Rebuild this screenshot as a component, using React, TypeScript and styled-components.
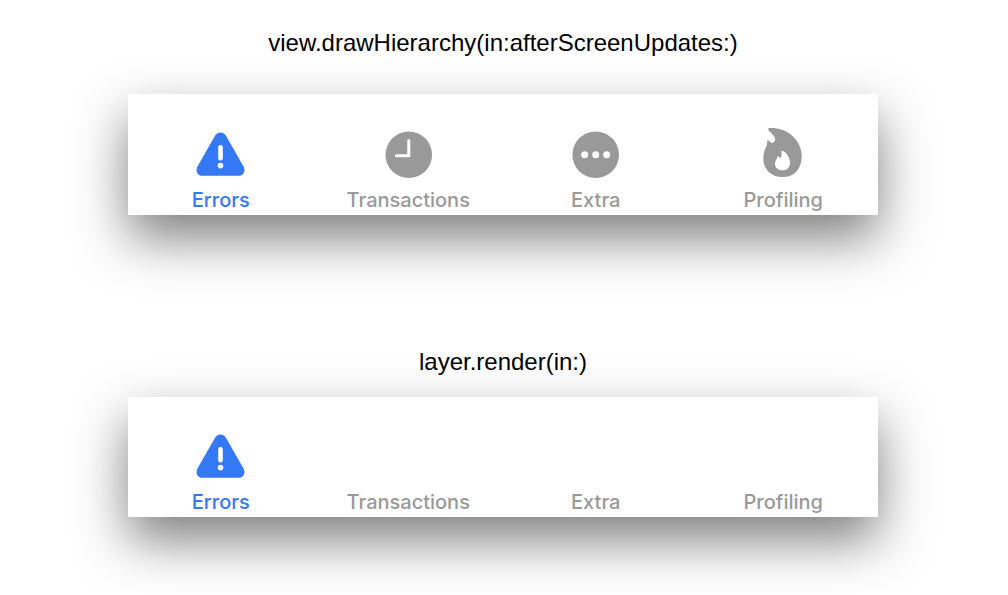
import React from "react";
import styled, { createGlobalStyle } from "styled-components";

const GlobalStyle = createGlobalStyle`
  *, *::before, *::after { box-sizing: border-box; }
  body {
    margin: 0;
    background: #fff;
    overflow-x: hidden;
  }
`;

const Page = styled.main`
  display: flex;
  flex-direction: column;
  gap: 132px;
  padding: 28px 130px 76px 128px;
`;

const Example = styled.section`
  display: flex;
  flex-direction: column;
`;

const Title = styled.h2<{ $gap: number }>`
  margin: 0 0 ${(p) => p.$gap}px;
  font: 400 24px/30px "Liberation Sans", Arial, sans-serif;
  color: #000;
  text-align: center;
`;

const TabBar = styled.nav<{ $height: number }>`
  display: grid;
  grid-template-columns: repeat(4, 1fr);
  align-items: end;
  height: ${(p) => p.$height}px;
  padding-bottom: 3px;
  background: #fff;
  box-shadow: 0 23px 52px rgba(0, 0, 0, 0.51);
`;

const Tab = styled.button<{ $active: boolean }>`
  display: flex;
  flex-direction: column;
  align-items: center;
  gap: 8px;
  padding: 0 2px 0 0;
  border: 0;
  background: none;
  color: ${(p) => (p.$active ? "#3478f6" : "#999")};
  font: 500 20px/24px Inter, "Liberation Sans", sans-serif;
`;

const Icon = styled.svg`
  display: block;
  width: 52px;
  height: 52px;
`;

const WarningIcon = () => (
  <Icon viewBox="0 0 52 52" aria-hidden="true">
    <path
      fill="currentColor"
      d="M20.2 7.6C22.6 3.6 28.4 3.6 30.8 7.6L48.4 38.2C51 43 48.6 47.800 43.500 47.800H7.500C2.400 47.800 0 43 2.600 38.200Z"
    />
    <rect x="23.2" y="17" width="4.600" height="15.500" rx="2.200" fill="#fff" />
    <circle cx="25.500" cy="37.600" r="2.800" fill="#fff" />
  </Icon>
);

const ClockIcon = () => (
  <Icon viewBox="0 0 52 52" aria-hidden="true">
    <circle cx="26.8" cy="26.8" r="23.3" fill="currentColor" />
    <path d="M26.8 12.5V27.7H14.4" fill="none" stroke="#fff" strokeWidth="3" strokeLinecap="round" strokeLinejoin="round" />
  </Icon>
);

const MoreIcon = () => (
  <Icon viewBox="0 0 52 52" aria-hidden="true">
    <circle cx="25.7" cy="26.8" r="23.3" fill="currentColor" />
    <g fill="#fff">
      <circle cx="14.7" cy="26.8" r="3.5" />
      <circle cx="25.7" cy="26.8" r="3.5" />
      <circle cx="36.7" cy="26.8" r="3.5" />
    </g>
  </Icon>
);

const FlameIcon = () => (
  <Icon viewBox="0 0 52 52" aria-hidden="true">
    <path
      fill="currentColor"
      fillRule="evenodd"
      d="M12.6.1C20-.3 27.8 1.8 33.5 6.2C40.8 11.8 44.7 20 44.7 28.5C44.7 41 37 49.1 25.600 49.1C14.200 49.1 6.300 41.500 6.300 30.500C6.300 25.500 7.500 22 9.300 18.800C10.300 16.900 10.100 15.100 10.100 13.700C10.100 12.500 11.200 12.300 12 13C12.900 13.900 13.800 14.600 14.900 15C16.900 14.500 18.400 13.200 18.100 10.900C17.600 7.600 14 5.400 11.700 2.500C10.800 1.200 11.200.2 12.600.1ZM25.300 22.800C24.500 22.600 24.200 23.200 24.400 24.300C24.700 26.300 24.500 28.700 23.700 30.200C22.900 29.900 22.400 29.300 21.700 28.600C21.200 28.100 20.500 28.300 20.400 29C20.200 31 18 32.400 18 35.700C18 39.700 21 42.300 25.500 42.300C30 42.300 33 39.500 33 35C33 29 29.500 24.300 25.300 22.800Z"
    />
  </Icon>
);

type TabItem = { label: string; icon: React.ReactNode };

const renderedTabs: TabItem[] = [
  { label: "Errors", icon: <WarningIcon /> },
  { label: "Transactions", icon: <ClockIcon /> },
  { label: "Extra", icon: <MoreIcon /> },
  { label: "Profiling", icon: <FlameIcon /> },
];

const missingIconTabs: TabItem[] = renderedTabs.map((tab, i) => (i === 0 ? tab : { ...tab, icon: null }));

type ComparisonProps = { title: string; tabs: TabItem[]; titleGap: number; height: number };

const Comparison = ({ title, tabs, titleGap, height }: ComparisonProps) => (
  <Example>
    <Title $gap={titleGap}>{title}</Title>
    <TabBar $height={height} aria-label={title}>
      {tabs.map((tab, i) => (
        <Tab key={tab.label} type="button" $active={i === 0}>
          {tab.icon}
          <span>{tab.label}</span>
        </Tab>
      ))}
    </TabBar>
  </Example>
);

export default function App() {
  return (
    <>
      <GlobalStyle />
      <Page>
        <Comparison title="view.drawHierarchy(in:afterScreenUpdates:)" tabs={renderedTabs} titleGap={36} height={121} />
        <Comparison title="layer.render(in:)" tabs={missingIconTabs} titleGap={20} height={120} />
      </Page>
    </>
  );
}
